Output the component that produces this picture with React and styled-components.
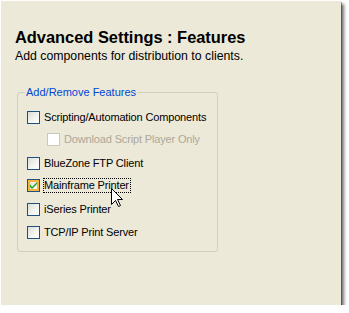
import React from 'react';
import styled, { createGlobalStyle } from 'styled-components';

const Global = createGlobalStyle`
  html, body {
    margin: 0;
    padding: 0;
    background: #ffffff;
  }
  body {
    font-family: Tahoma, "Liberation Sans", Arial, sans-serif;
  }
`;

const Panel = styled.div`
  position: relative;
  box-sizing: border-box;
  margin: 1px 0 0 1px;
  width: 340px;
  height: 304px;
  background: #ece9d8;
  box-shadow: 3px 3px 3px rgba(0, 0, 0, 0.55), 1px 1px 0 rgba(0, 0, 0, 0.3);
  padding: 26px 0 0 14px;
`;

const Title = styled.h1`
  margin: 0;
  font-family: "Liberation Sans", Arial, sans-serif;
  font-weight: bold;
  font-size: 16.4px;
  line-height: 20px;
  color: #000;
`;

const Subtitle = styled.p`
  margin: 1px 0 0;
  font-family: "Liberation Sans", Arial, sans-serif;
  font-size: 12.3px;
  line-height: 16px;
  color: #000;
`;

const Group = styled.fieldset`
  box-sizing: border-box;
  margin: 22px 0 0 2px;
  width: 201px;
  height: 166px;
  border: 1px solid #d0d0bf;
  border-radius: 3px;
  padding: 12px 0 0 9px;
  display: flex;
  flex-direction: column;
`;

const Legend = styled.legend`
  margin-left: -2px;
  padding: 0 1px;
  font-family: "Liberation Sans", Arial, sans-serif;
  font-size: 11px;
  line-height: 13px;
  color: #0046d5;
`;

const Row = styled.div`
  display: flex;
  align-items: flex-start;
  height: ${p => p.h}px;
  padding-left: ${p => (p.indent ? 20 : 0)}px;
`;

const Box = styled.span`
  position: relative;
  box-sizing: border-box;
  flex: none;
  width: 13px;
  height: 13px;
  border: 1px solid ${p => (p.disabled ? '#cac8bb' : '#1c5180')};
  background: ${p =>
    p.disabled
      ? '#ffffff'
      : 'linear-gradient(135deg, #dcdcd7 0%, #f3f3ef 55%, #ffffff 100%)'};
  box-shadow: ${p => (p.hot ? 'inset 0 0 0 2px #f9b33c' : 'none')};
`;

const Check = styled.svg`
  position: absolute;
  left: 2px;
  top: 2px;
`;

const Text = styled.span`
  margin: ${p => (p.focus ? '-1px 0 0 3px' : '0 0 0 4px')};
  padding: ${p => (p.focus ? '0 1px 0 0' : '0')};
  border: ${p => (p.focus ? '1px dotted #000' : 'none')};
  font-family: "Liberation Sans", Arial, sans-serif;
  font-size: 11px;
  letter-spacing: -0.15px;
  line-height: 13px;
  white-space: nowrap;
  color: ${p => (p.disabled ? '#aca899' : '#000')};
`;

const Cursor = styled.svg`
  position: absolute;
  left: 110px;
  top: 187px;
`;

const items = [
  { label: 'Scripting/Automation Components', h: 22 },
  { label: 'Download Script Player Only', h: 24, indent: true, disabled: true },
  { label: 'BlueZone FTP Client', h: 22 },
  { label: 'Mainframe Printer', h: 24, checked: true, hot: true, focus: true },
  { label: 'iSeries Printer', h: 23 },
  { label: 'TCP/IP Print Server', h: 13 },
];

const CheckBox = ({ item }) => (
  <Row h={item.h} indent={item.indent}>
    <Box disabled={item.disabled} hot={item.hot}>
      {item.checked && (
        <Check width="7" height="7" viewBox="0 0 7 7">
          <path d="M0 2 L0 5 L2 7 L7 2 L7 0 L2 5 Z" fill="#21a121" />
        </Check>
      )}
    </Box>
    <Text disabled={item.disabled} focus={item.focus}>{item.label}</Text>
  </Row>
);

export default function App() {
  return (
    <>
      <Global />
      <Panel>
        <Title>Advanced Settings : Features</Title>
        <Subtitle>Add components for distribution to clients.</Subtitle>
        <Group>
          <Legend>Add/Remove Features</Legend>
          {items.map(item => (
            <CheckBox key={item.label} item={item} />
          ))}
        </Group>
        <Cursor width="13" height="20" viewBox="0 0 13 20">
          <path
            d="M0.5 0.5 L0.5 16.5 L4.5 12.5 L7.5 18.5 L9.5 17.5 L6.5 11.5 L11.5 11.5 Z"
            fill="#fff"
            stroke="#000"
            strokeWidth="1"
          />
        </Cursor>
      </Panel>
    </>
  );
}
